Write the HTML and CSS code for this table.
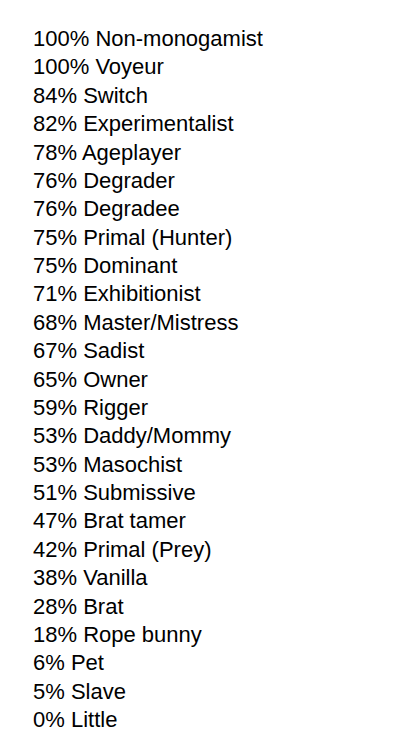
FILE: index.html
```html
<!DOCTYPE html>
<html>
<head>
<meta charset="utf-8">
<link rel="stylesheet" href="styles.css">
</head>
<body>
<ul class="list">
<li>100% Non-monogamist</li>
<li>100% Voyeur</li>
<li>84% Switch</li>
<li>82% Experimentalist</li>
<li>78% Ageplayer</li>
<li>76% Degrader</li>
<li>76% Degradee</li>
<li>75% Primal (Hunter)</li>
<li>75% Dominant</li>
<li>71% Exhibitionist</li>
<li>68% Master/Mistress</li>
<li>67% Sadist</li>
<li>65% Owner</li>
<li>59% Rigger</li>
<li>53% Daddy/Mommy</li>
<li>53% Masochist</li>
<li>51% Submissive</li>
<li>47% Brat tamer</li>
<li>42% Primal (Prey)</li>
<li>38% Vanilla</li>
<li>28% Brat</li>
<li>18% Rope bunny</li>
<li>6% Pet</li>
<li>5% Slave</li>
<li>0% Little</li>
</ul>
</body>
</html>
```
FILE: styles.css
```css
html, body {
  margin: 0;
  padding: 0;
  background: #fff;
}
body {
  padding: 25px 0 0 33px;
  font-family: "Liberation Sans", Arial, sans-serif;
  font-size: 22px;
  color: #000;
}
.list {
  list-style: none;
  margin: 0;
  padding: 0;
}
.list li {
  line-height: 28.375px;
  white-space: nowrap;
}
```
